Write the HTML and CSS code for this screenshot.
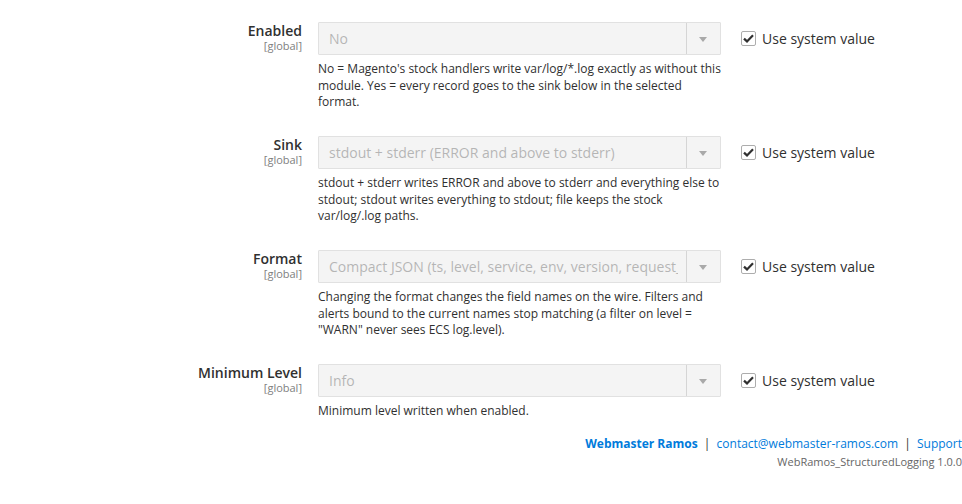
FILE: index.html
```html
<!DOCTYPE html>
<html lang="en">
<head>
  <meta charset="UTF-8">
  <title>Structured Logging - Configuration</title>
  <link rel="stylesheet" href="styles.css">
</head>
<body>
  <div class="fieldset">

    <div class="row">
      <div class="label">
        <span class="title">Enabled</span>
        <span class="scope">[global]</span>
      </div>
      <div class="value">
        <div class="control">
          <select disabled>
            <option>No</option>
            <option>Yes</option>
          </select>
          <span class="arrow"></span>
        </div>
        <p class="note">No = Magento's stock handlers write var/log/*.log exactly as without this module. Yes = every record goes to the sink below in the selected format.</p>
      </div>
      <label class="use-default">
        <span class="check">
          <svg width="11" height="9" viewBox="0 0 11 9"><path d="M1 4.6 L4 7.4 L10 1.2" fill="none" stroke="#303030" stroke-width="2.2"/></svg>
        </span>
        Use system value
      </label>
    </div>

    <div class="row">
      <div class="label">
        <span class="title">Sink</span>
        <span class="scope">[global]</span>
      </div>
      <div class="value">
        <div class="control">
          <select disabled>
            <option>stdout + stderr (ERROR and above to stderr)</option>
            <option>stdout</option>
            <option>file</option>
          </select>
          <span class="arrow"></span>
        </div>
        <p class="note">stdout + stderr writes ERROR and above to stderr and everything else to stdout; stdout writes everything to stdout; file keeps the stock var/log/.log paths.</p>
      </div>
      <label class="use-default">
        <span class="check">
          <svg width="11" height="9" viewBox="0 0 11 9"><path d="M1 4.6 L4 7.4 L10 1.2" fill="none" stroke="#303030" stroke-width="2.2"/></svg>
        </span>
        Use system value
      </label>
    </div>

    <div class="row">
      <div class="label">
        <span class="title">Format</span>
        <span class="scope">[global]</span>
      </div>
      <div class="value">
        <div class="control">
          <select disabled>
            <option>Compact JSON (ts, level, service, env, version, request_id, message)</option>
            <option>ECS</option>
          </select>
          <span class="arrow"></span>
        </div>
        <p class="note">Changing the format changes the field names on the wire. Filters and alerts bound to the current names stop matching (a filter on level = "WARN" never sees ECS log.level).</p>
      </div>
      <label class="use-default">
        <span class="check">
          <svg width="11" height="9" viewBox="0 0 11 9"><path d="M1 4.6 L4 7.4 L10 1.2" fill="none" stroke="#303030" stroke-width="2.2"/></svg>
        </span>
        Use system value
      </label>
    </div>

    <div class="row">
      <div class="label">
        <span class="title">Minimum Level</span>
        <span class="scope">[global]</span>
      </div>
      <div class="value">
        <div class="control">
          <select disabled>
            <option>Info</option>
            <option>Debug</option>
            <option>Warning</option>
            <option>Error</option>
          </select>
          <span class="arrow"></span>
        </div>
        <p class="note">Minimum level written when enabled.</p>
      </div>
      <label class="use-default">
        <span class="check">
          <svg width="11" height="9" viewBox="0 0 11 9"><path d="M1 4.6 L4 7.4 L10 1.2" fill="none" stroke="#303030" stroke-width="2.2"/></svg>
        </span>
        Use system value
      </label>
    </div>

  </div>

  <div class="footer">
    <div class="links">
      <a href="#" class="brand">Webmaster Ramos</a>
      <span class="sep">|</span>
      <a href="#">contact@webmaster-ramos.com</a>
      <span class="sep">|</span>
      <a href="#">Support</a>
    </div>
    <div class="version">WebRamos_StructuredLogging 1.0.0</div>
  </div>
</body>
</html>
```

FILE: styles.css
```css
body {
  margin: 0;
  font-family: "Open Sans", "Noto Sans", sans-serif;
  font-size: 14px;
  color: #303030;
  background: #fff;
}
.fieldset {
  padding-top: 22px;
}
.row {
  display: grid;
  grid-template-columns: 302px 403px auto;
  column-gap: 16px;
  margin-bottom: 25.5px;
}
.label {
  display: flex;
  flex-direction: column;
  align-items: flex-end;
}
.label .title {
  font-weight: 600;
  font-size: 14px;
  line-height: 17px;
}
.label .scope {
  font-size: 11px;
  line-height: 13px;
  color: #808080;
}
.control {
  position: relative;
  height: 33px;
  opacity: 0.5;
}
.control select {
  appearance: none;
  -webkit-appearance: none;
  width: 100%;
  height: 33px;
  margin: 0;
  padding: 0 42px 0 10px;
  font-family: "Open Sans", "Noto Sans", sans-serif;
  font-size: 14px;
  color: #303030;
  background: #e3e3e3;
  border: 1px solid #adadad;
  border-radius: 1px;
  box-sizing: border-box;
}
.control .arrow {
  position: absolute;
  top: 1px;
  right: 1px;
  bottom: 1px;
  width: 33px;
  border-left: 1px solid #adadad;
}
.control .arrow::before {
  content: "";
  position: absolute;
  left: 12px;
  top: 14px;
  border-left: 4px solid transparent;
  border-right: 4px solid transparent;
  border-top: 5px solid #555;
}
.note {
  margin: 6px 0 0;
  font-size: 12px;
  line-height: 16.5px;
  color: #303030;
}
.use-default {
  display: flex;
  align-items: center;
  gap: 6px;
  height: 33px;
  margin-left: 4px;
  font-size: 14px;
  line-height: 1;
  box-sizing: border-box;
}
.check {
  display: flex;
  align-items: center;
  justify-content: center;
  width: 13px;
  height: 13px;
  border: 1px solid #adadad;
  border-radius: 2px;
  background: #fff;
}
.footer {
  text-align: right;
  margin-top: -10px;
}
.links {
  font-size: 12px;
  line-height: 17px;
}
.links a {
  color: #007bdb;
  text-decoration: none;
}
.links a.brand {
  font-weight: 700;
}
.links .sep {
  color: #303030;
  margin: 0 3px;
}
.version {
  margin-top: 2px;
  font-size: 11px;
  line-height: 15px;
  color: #666;
}
```
